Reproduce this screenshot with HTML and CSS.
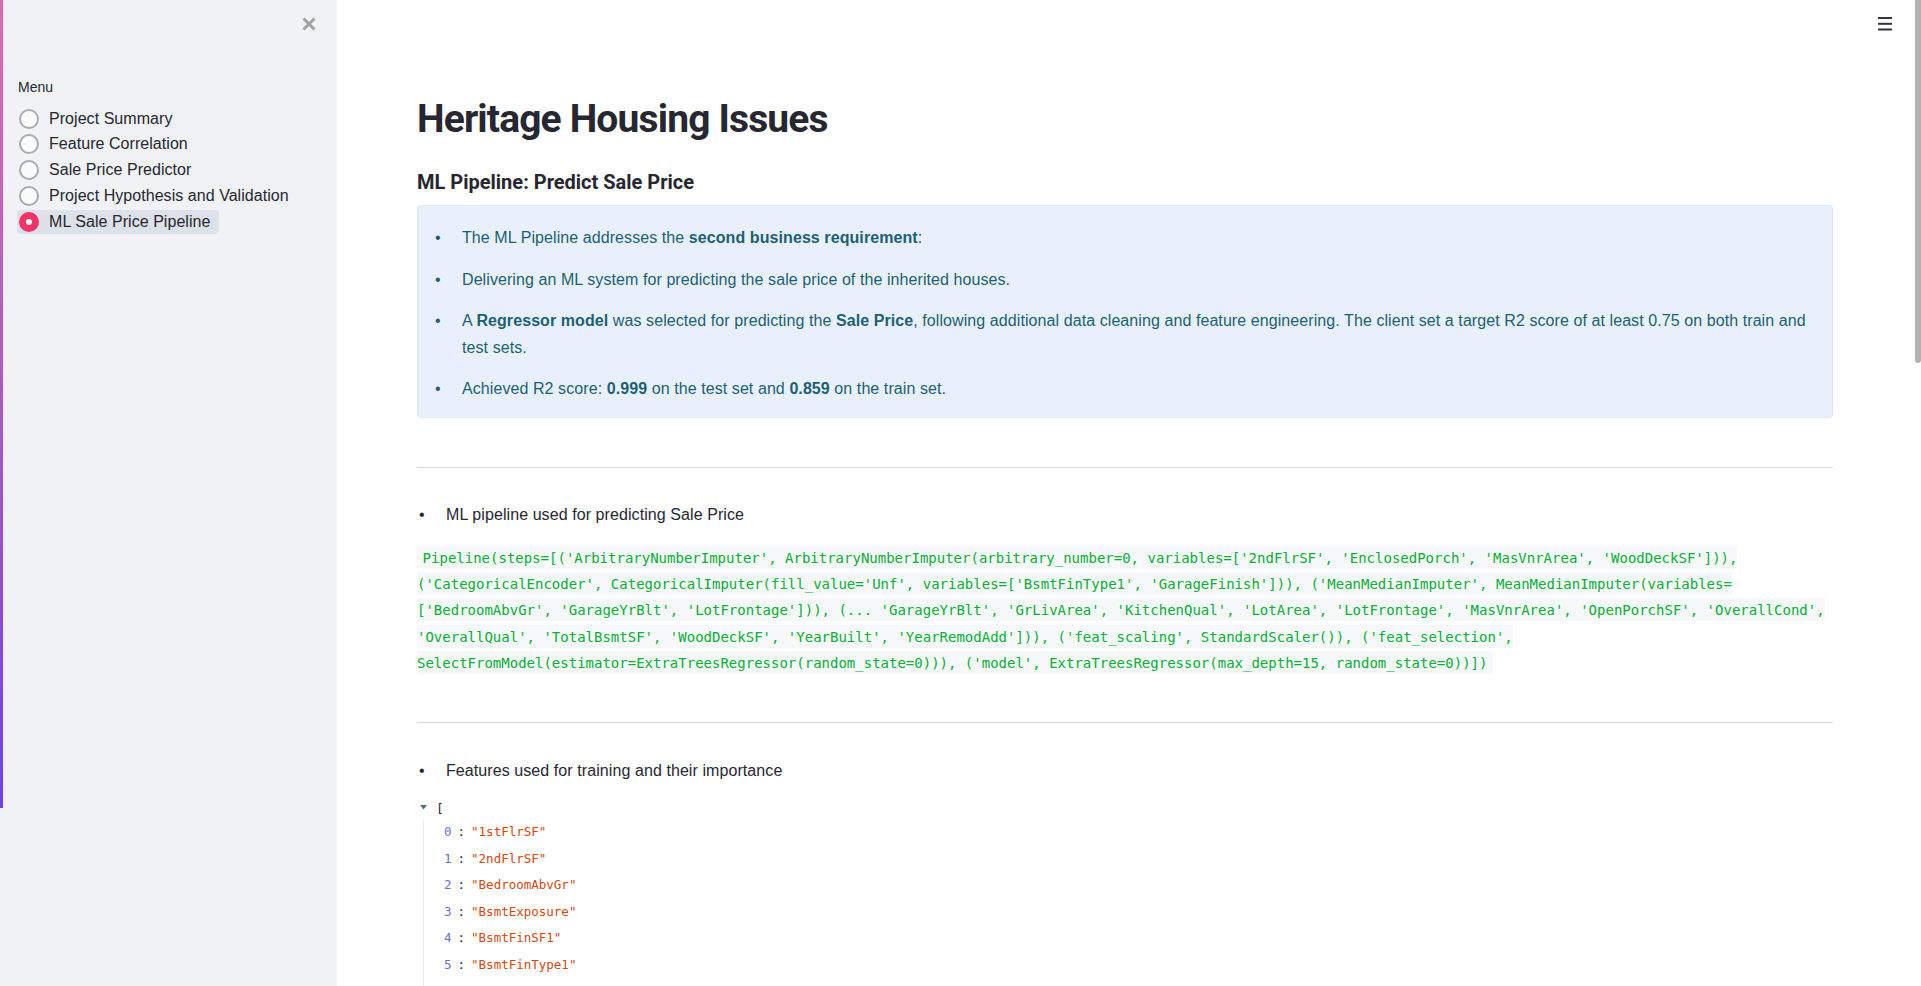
FILE: index.html
```html
<!DOCTYPE html>
<html lang="en">
<head>
<meta charset="utf-8">
<title>Heritage Housing Issues</title>
<link rel="stylesheet" href="styles.css">
</head>
<body>
<div class="app">
  <aside class="sidebar">
    <div class="sidebar-top">
      <svg class="close-icon" width="14" height="14" viewBox="0 0 14 14"><path d="M1.5 1.5 L12.5 12.5 M12.5 1.5 L1.5 12.5" stroke="#a3a3a3" stroke-width="3" fill="none"/></svg>
    </div>
    <div class="menu-label">Menu</div>
    <div class="radio-list">
      <div class="radio-row"><span class="radio"></span><span class="radio-text">Project Summary</span></div>
      <div class="radio-row"><span class="radio"></span><span class="radio-text">Feature Correlation</span></div>
      <div class="radio-row"><span class="radio"></span><span class="radio-text">Sale Price Predictor</span></div>
      <div class="radio-row"><span class="radio"></span><span class="radio-text">Project Hypothesis and Validation</span></div>
      <div class="radio-row selected"><span class="radio on"></span><span class="radio-text">ML Sale Price Pipeline</span></div>
    </div>
  </aside>
  <main class="main">
    <svg class="hamburger" width="14" height="14" viewBox="0 0 14 14"><rect x="0" y="0" width="14" height="2" fill="#31333f"/><rect x="0" y="5.8" width="14" height="2" fill="#31333f"/><rect x="0" y="11.5" width="14" height="2" fill="#31333f"/></svg>
    <div class="content">
      <h1 class="title">Heritage Housing Issues</h1>
      <h3 class="subheader">ML Pipeline: Predict Sale Price</h3>
      <div class="info-box">
        <ul class="bullets">
          <li><p>The ML Pipeline addresses the <b>second business requirement</b>:</p></li>
          <li><p>Delivering an ML system for predicting the sale price of the inherited houses.</p></li>
          <li><p>A <b>Regressor model</b> was selected for predicting the <b>Sale Price</b>, following additional data cleaning and feature engineering. The client set a target R2 score of at least 0.75 on both train and test sets.</p></li>
          <li><p>Achieved R2 score: <b>0.999</b> on the test set and <b>0.859</b> on the train set.</p></li>
        </ul>
      </div>
      <div class="divider first"></div>
      <ul class="bullets plain">
        <li><p>ML pipeline used for predicting Sale Price</p></li>
      </ul>
      <p class="code-para"><code>Pipeline(steps=[('ArbitraryNumberImputer', ArbitraryNumberImputer(arbitrary_number=0, variables=['2ndFlrSF', 'EnclosedPorch', 'MasVnrArea', 'WoodDeckSF'])), ('CategoricalEncoder', CategoricalImputer(fill_value='Unf', variables=['BsmtFinType1', 'GarageFinish'])), ('MeanMedianImputer', MeanMedianImputer(variables= ['BedroomAbvGr', 'GarageYrBlt', 'LotFrontage'])), (... 'GarageYrBlt', 'GrLivArea', 'KitchenQual', 'LotArea', 'LotFrontage', 'MasVnrArea', 'OpenPorchSF', 'OverallCond', 'OverallQual', 'TotalBsmtSF', 'WoodDeckSF', 'YearBuilt', 'YearRemodAdd'])), ('feat_scaling', StandardScaler()), ('feat_selection', SelectFromModel(estimator=ExtraTreesRegressor(random_state=0))), ('model', ExtraTreesRegressor(max_depth=15, random_state=0))])</code></p>
      <div class="divider second"></div>
      <ul class="bullets plain">
        <li><p>Features used for training and their importance</p></li>
      </ul>
      <div class="json">
        <div class="json-head"><svg class="caret" width="7" height="5" viewBox="0 0 7 5"><path d="M0 0 L7 0 L3.5 4.5 Z" fill="#586e75"/></svg><span class="bracket">[</span></div>
        <div class="json-list">
          <div class="json-row"><span class="idx">0</span><span class="colon">:</span><span class="str">"1stFlrSF"</span></div>
          <div class="json-row"><span class="idx">1</span><span class="colon">:</span><span class="str">"2ndFlrSF"</span></div>
          <div class="json-row"><span class="idx">2</span><span class="colon">:</span><span class="str">"BedroomAbvGr"</span></div>
          <div class="json-row"><span class="idx">3</span><span class="colon">:</span><span class="str">"BsmtExposure"</span></div>
          <div class="json-row"><span class="idx">4</span><span class="colon">:</span><span class="str">"BsmtFinSF1"</span></div>
          <div class="json-row"><span class="idx">5</span><span class="colon">:</span><span class="str">"BsmtFinType1"</span></div>
          <div class="json-row"><span class="idx">6</span><span class="colon">:</span><span class="str">"BsmtUnfSF"</span></div>
          <div class="json-row"><span class="idx">7</span><span class="colon">:</span><span class="str">"EnclosedPorch"</span></div>
          <div class="json-row"><span class="idx">8</span><span class="colon">:</span><span class="str">"GarageArea"</span></div>
        </div>
      </div>
    </div>
    <div class="scrollbar"><div class="thumb"></div></div>
  </main>
</div>
</body>
</html>
```

FILE: styles.css
```css
html, body {
  margin: 0;
  padding: 0;
  height: 100%;
  overflow: hidden;
  background: #ffffff;
}

body {
  font-family: "Liberation Sans", Arial, sans-serif;
  font-size: 16px;
  color: #262730;
}

.app {
  display: flex;
  height: 986px;
  overflow: hidden;
}

/* ---------- Sidebar ---------- */
.sidebar {
  width: 337px;
  flex: none;
  background: #f0f2f6;
  position: relative;
  padding-left: 17px;
  box-sizing: border-box;
}

.sidebar::before {
  content: "";
  position: absolute;
  left: 0;
  top: 0;
  width: 3px;
  height: 808px;
  background: linear-gradient(to bottom, #e767ac, #a853d0 55%, #6a42f2);
}

.sidebar-top {
  height: 48px;
  display: flex;
  justify-content: flex-end;
  align-items: flex-start;
  padding: 17px 21px 0 0;
  box-sizing: border-box;
}

.menu-label {
  margin-top: 29px;
  font-size: 14px;
  line-height: 20px;
  padding-left: 1px;
}

.radio-list {
  margin-top: 9.5px;
  display: flex;
  flex-direction: column;
  align-items: flex-start;
  gap: 1.75px;
}

.radio-row {
  display: flex;
  align-items: center;
  height: 24px;
  padding: 0 9px 0 2px;
  border-radius: 4px;
  gap: 10px;
  letter-spacing: 0.05px;
}

.radio-row.selected {
  background: #dde1e9;
}

.radio {
  width: 20px;
  height: 20px;
  box-sizing: border-box;
  border-radius: 50%;
  border: 2px solid #a9abb1;
  background: #fafafb;
  display: flex;
  align-items: center;
  justify-content: center;
  flex: none;
}

.radio.on {
  border: none;
  background: #f63366;
}

.radio.on::after {
  content: "";
  width: 6px;
  height: 6px;
  border-radius: 50%;
  background: #ffffff;
}

.radio-text {
  font-size: 16px;
  line-height: 24px;
  white-space: nowrap;
}

/* ---------- Main ---------- */
.main {
  flex: 1;
  min-width: 0;
  display: flex;
  position: relative;
}

.hamburger {
  position: absolute;
  top: 17px;
  right: 29px;
}

.content {
  flex: 1;
  min-width: 0;
  padding: 96px 80px 0 80px;
}

.scrollbar {
  width: 8px;
  flex: none;
}

.thumb {
  margin-left: 2px;
  width: 6px;
  height: 363px;
  background: #b2b2b2;
  border-radius: 0 0 3px 3px;
}

.title {
  margin: 0;
  font-family: Roboto, "Liberation Sans", sans-serif;
  font-weight: 700;
  font-size: 39px;
  line-height: 1.2;
  letter-spacing: -0.85px;
  color: #262730;
}

.subheader {
  margin: 27px 0 0 0;
  font-family: Roboto, "Liberation Sans", sans-serif;
  font-weight: 700;
  font-size: 20px;
  line-height: 24px;
  color: #262730;
}

.info-box {
  margin-top: 11px;
  background: #e8f1fb;
  border: 1px solid #dae8f8;
  border-radius: 4px;
  padding: 19.5px 16px 14.5px 16px;
  color: #1d5f72;
}

.bullets {
  list-style: none;
  margin: 0;
  padding: 0;
}

.bullets li {
  display: flex;
  line-height: 26.4px;
  letter-spacing: 0.08px;
}

.bullets li + li {
  margin-top: 15.2px;
}

.bullets li::before {
  content: "\2022";
  flex: 0 0 28px;
  padding-left: 1px;
  box-sizing: border-box;
}

.bullets.plain li::before {
  flex-basis: 29px;
  padding-left: 2px;
}

.bullets p {
  margin: 0;
  flex: 1;
  min-width: 0;
}

.bullets b {
  font-weight: 700;
}

.divider {
  height: 1px;
  background: #d6d6d9;
}

.divider.first {
  margin: 48.5px 0 34px 0;
}

.divider.second {
  margin: 46px 0 35px 0;
}

.code-para {
  margin: 16px 0 0 0;
  line-height: 26.25px;
}

.code-para code {
  font-family: "DejaVu Sans Mono", "Liberation Mono", monospace;
  font-size: 14px;
  color: #09ab3b;
  background: #f7f8fa;
  padding: 0.25em 0.4em;
  border-radius: 4px;
  -webkit-box-decoration-break: slice;
  box-decoration-break: slice;
  word-break: normal;
}

/* ---------- JSON viewer ---------- */
.json {
  margin-top: 15px;
  font-family: "DejaVu Sans Mono", "Liberation Mono", monospace;
  font-size: 12.5px;
}

.json-head {
  height: 20px;
  display: flex;
  align-items: center;
  padding-left: 3px;
}

.caret {
  flex: none;
  margin-top: -3px;
}

.bracket {
  margin-left: 9px;
  color: #262730;
  font-size: 13px;
}

.json-list {
  margin-left: 6px;
  border-left: 1px solid #ebebeb;
  padding-left: 20px;
}

.json-row {
  height: 26.6px;
  line-height: 26.6px;
  white-space: nowrap;
}

.idx {
  color: #6c71c4;
}

.colon {
  margin: 0 6px;
  color: #262730;
}

.str {
  color: #cb4b16;
}
```
